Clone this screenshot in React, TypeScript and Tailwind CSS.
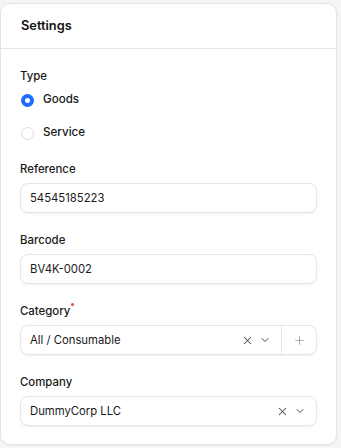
import { X, ChevronDown, Plus } from 'lucide-react';

function Field({ label, children, required }: { label: string; children: React.ReactNode; required?: boolean }) {
  return (
    <div className="flex flex-col items-start">
      <label className="relative block text-[11.4px] font-medium leading-[16px] text-[#1a1a1a]">
        {label}
        {required && <span className="absolute -right-[4px] top-0 h-[3px] w-[3px] rounded-full bg-[#e5484d]" />}
      </label>
      <div className="mt-[6px] w-full">{children}</div>
    </div>
  );
}

const boxClass =
  'flex h-[30px] w-full items-center rounded-[8px] border border-[#e6e6e6] bg-white text-[11.3px] leading-[16px] text-[#1a1a1a] shadow-[0_1px_2px_rgba(0,0,0,0.06)]';

export default function App() {
  return (
    <div className="h-screen bg-[#f5f5f6] pt-[3px]" style={{ fontFamily: 'Inter, "Noto Sans", sans-serif' }}>
      <div className="w-[337px] rounded-[10px] border border-[#e4e4e6] bg-white shadow-[0_1px_2px_rgba(0,0,0,0.05)]">
        {/* Header */}
        <div className="flex h-[45px] items-center border-b border-[#e6e6e8] px-5">
          <h2 className="text-[12.8px] font-semibold leading-[16px] text-[#111]">Settings</h2>
        </div>

        <div className="flex flex-col gap-[19px] px-[19px] pb-[18px] pt-[19px]">
          {/* Type */}
          <div className="pb-[1px]">
            <div className="text-[11.4px] font-medium leading-[16px] text-[#1a1a1a]">Type</div>
            <div className="mt-[8px] flex flex-col gap-[17px]">
              <div className="flex h-[16px] items-center gap-[9px]">
                <span className="ml-[1px] flex h-[13px] w-[13px] items-center justify-center rounded-full bg-[#1f6bff]">
                  <span className="h-[5px] w-[5px] rounded-full bg-white" />
                </span>
                <span className="text-[11.6px] font-medium text-[#1a1a1a]">Goods</span>
              </div>
              <div className="flex h-[16px] items-center gap-[9px]">
                <span className="ml-[1px] h-[13px] w-[13px] rounded-full border border-[#dcdcdf] bg-white" />
                <span className="text-[11.6px] font-medium text-[#1a1a1a]">Service</span>
              </div>
            </div>
          </div>

          <Field label="Reference">
            <div className={`${boxClass} px-[9px]`}>54545185223</div>
          </Field>

          <Field label="Barcode">
            <div className={`${boxClass} px-[9px]`}>BV4K-0002</div>
          </Field>

          <Field label="Category" required>
            <div className={boxClass}>
              <span className="flex-1 pl-[9px]">All / Consumable</span>
              <X className="mr-[5px] h-[13px] w-[13px] text-[#4f4f56]" strokeWidth={1.9} />
              <ChevronDown className="mr-[10px] h-[12px] w-[12px] text-[#4f4f56]" strokeWidth={2} />
              <div className="flex h-full w-[35px] items-center justify-center border-l border-[#e6e6e6]">
                <Plus className="h-[13px] w-[13px] text-[#a5a5ab]" strokeWidth={1.75} />
              </div>
            </div>
          </Field>

          <Field label="Company">
            <div className={boxClass}>
              <span className="flex-1 pl-[9px]">DummyCorp LLC</span>
              <X className="mr-[5px] h-[13px] w-[13px] text-[#4f4f56]" strokeWidth={1.9} />
              <ChevronDown className="mr-[10px] h-[12px] w-[12px] text-[#4f4f56]" strokeWidth={2} />
            </div>
          </Field>
        </div>
      </div>
    </div>
  );
}
